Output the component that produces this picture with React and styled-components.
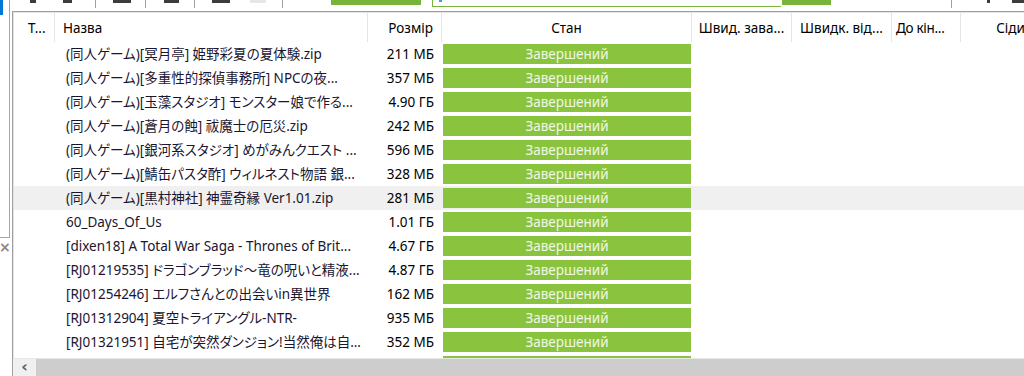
import styled, { createGlobalStyle } from "styled-components";

const GlobalStyle = createGlobalStyle`
  html, body {
    margin: 0;
    padding: 0;
    background: #ffffff;
  }
  body {
    font-family: "Noto Sans", "Noto Sans CJK JP", sans-serif;
    font-size: 13.5px;
    font-feature-settings: "palt";
    color: #000;
  }
`;

const columns = [
  { key: "type", title: "T...", width: 41, align: "left", padL: 14, padR: 8 },
  { key: "name", title: "Назва", width: 313, align: "left", padL: 8, padR: 8 },
  { key: "size", title: "Розмір", width: 74, align: "right", padL: 8, padR: 8 },
  { key: "state", title: "Стан", width: 250, align: "center", padL: 8, padR: 8 },
  { key: "dl", title: "Швид. зава...", width: 100, align: "center", padL: 3, padR: 3 },
  { key: "up", title: "Швидк. від...", width: 100, align: "center", padL: 3, padR: 3 },
  { key: "eta", title: "До кін...", width: 69, align: "left", padL: 4, padR: 0, tight: true },
  { key: "seeds", title: "Сіди", width: 100, align: "center", padL: 8, padR: 8 },
];

const torrents = [
  ["(同人ゲーム)[冥月亭] 姫野彩夏の夏体験.zip", "211 МБ"],
  ["(同人ゲーム)[多重性的探偵事務所] NPCの夜...", "357 МБ"],
  ["(同人ゲーム)[玉藻スタジオ] モンスター娘で作る...", "4.90 ГБ"],
  ["(同人ゲーム)[蒼月の蝕] 祓魔士の厄災.zip", "242 МБ"],
  ["(同人ゲーム)[銀河系スタジオ] めがみんクエスト ...", "596 МБ"],
  ["(同人ゲーム)[鯖缶パスタ酢] ウィルネスト物語 銀...", "328 МБ"],
  ["(同人ゲーム)[黒村神社] 神霊奇縁 Ver1.01.zip", "281 МБ"],
  ["60_Days_Of_Us", "1.01 ГБ"],
  ["[dixen18] A Total War Saga - Thrones of Brit...", "4.67 ГБ"],
  ["[RJ01219535] ドラゴンブラッド～竜の呪いと精液...", "4.87 ГБ"],
  ["[RJ01254246] エルフさんとの出会いin異世界", "162 МБ"],
  ["[RJ01312904] 夏空トライアングル-NTR-", "935 МБ"],
  ["[RJ01321951] 自宅が突然ダンジョン!当然俺は自...", "352 МБ"],
  ["[RJ01334417] 異世界転生したらサキュバスの...", "1.12 ГБ"],
];

function App() {
  return (
    <>
      <GlobalStyle />
      <Window>
        <Toolbar>
          <ToolIcon $w={6} $ml={30} />
          <ToolIcon $w={9} $ml={27} />
          <ToolSep $ml={23} />
          <ToolIcon $w={18} $ml={17} />
          <ToolSep $ml={14} />
          <ToolIcon $w={15} $ml={18} />
          <ToolSep $ml={15} />
          <ToolIcon $w={18} $ml={17} />
          <ToolIcon $w={16} $ml={20} $light />
          <ToolSep $ml={16} />
          <GreenBlock $w={90} $ml={48} />
          <SearchBox>
            <SearchDot />
          </SearchBox>
          <GreenBlock $w={49} $ml={1} />
          <ToolSep $ml={120} />
          <ToolIcon $w={3} $ml={35} />
          <ToolIcon $w={14} $ml={22} />
        </Toolbar>
        <Main>
          <SidePane>
            <SideBox>
              <SideSelected />
            </SideBox>
            <SideClose>×</SideClose>
          </SidePane>
          <ListPanel>
            <ListArea>
              <HeaderRow>
                {columns.map((c) => (
                  <HeaderCell
                    key={c.key}
                    $w={c.width}
                    $align={c.align}
                    $padL={c.padL}
                    $padR={c.padR}
                    $tight={c.tight}
                  >
                    {c.title}
                  </HeaderCell>
                ))}
              </HeaderRow>
              {torrents.map(([name, size], i) => (
                <Row key={i} $selected={i === 6}>
                  <Cell $w={41} />
                  <NameCell $w={313}>{name}</NameCell>
                  <Cell $w={74} $align="right">
                    {size}
                  </Cell>
                  <StateCell $w={250}>
                    <Progress>Завершений</Progress>
                  </StateCell>
                </Row>
              ))}
            </ListArea>
            <HScroll>
              <ScrollArrow>‹</ScrollArrow>
              <ScrollThumb />
            </HScroll>
          </ListPanel>
        </Main>
      </Window>
    </>
  );
}

export default App;

const Window = styled.div`
  width: 1024px;
  height: 376px;
  display: flex;
  flex-direction: column;
  overflow: hidden;
  background: #ffffff;
`;

const Toolbar = styled.div`
  height: 11px;
  flex: none;
  display: flex;
  align-items: flex-start;
  overflow: hidden;
  background: #ffffff;
`;

const ToolIcon = styled.div`
  width: ${(p) => p.$w}px;
  height: 3px;
  margin-left: ${(p) => p.$ml}px;
  background: ${(p) => (p.$light ? "#e6e6e6" : "#3c3c3c")};
  flex: none;
`;

const ToolSep = styled.div`
  width: 1px;
  height: 8px;
  margin-left: ${(p) => p.$ml}px;
  background: #a0a0a0;
  flex: none;
`;

const GreenBlock = styled.div`
  width: ${(p) => p.$w}px;
  height: 5px;
  margin-left: ${(p) => p.$ml}px;
  background: #78b43c;
  flex: none;
`;

const SearchBox = styled.div`
  width: 349px;
  height: 7px;
  margin-left: 11px;
  border-left: 1px solid #78b43c;
  border-bottom: 1px solid #78b43c;
  box-sizing: border-box;
  flex: none;
  padding-left: 6px;
`;

const SearchDot = styled.div`
  width: 3px;
  height: 2px;
  background: #35a6d8;
`;

const Main = styled.div`
  flex: 1;
  display: flex;
  min-height: 0;
`;

const SidePane = styled.div`
  width: 12px;
  flex: none;
  display: flex;
  flex-direction: column;
`;

const SideBox = styled.div`
  width: 10px;
  height: 238px;
  margin-top: -11px;
  border-right: 1px solid #a6a6a6;
  border-bottom: 1px solid #a6a6a6;
  box-sizing: border-box;
  flex: none;
`;

const SideSelected = styled.div`
  width: 3px;
  height: 15px;
  background: #0078d7;
`;

const SideClose = styled.div`
  margin-top: 2px;
  margin-left: -1px;
  width: 10px;
  font-family: "DejaVu Sans", sans-serif;
  font-size: 14px;
  font-weight: bold;
  line-height: 14px;
  color: #8a8a8a;
  text-align: center;
`;

const ListPanel = styled.div`
  flex: 1;
  display: flex;
  flex-direction: column;
  border-left: 1px solid #a0a0a0;
  border-top: 1px solid #a0a0a0;
  box-shadow: inset 1px 1px 0 #e3e3e3;
  min-width: 0;
  overflow: hidden;
`;

const ListArea = styled.div`
  flex: 1;
  overflow: hidden;
  padding-left: 1px;
`;

const HeaderRow = styled.div`
  display: flex;
  height: 30px;
  white-space: nowrap;
`;

const HeaderCell = styled.div`
  width: ${(p) => p.$w}px;
  flex: none;
  box-sizing: border-box;
  height: 30px;
  padding: 3px ${(p) => p.$padR}px 0 ${(p) => p.$padL}px;
  text-align: ${(p) => p.$align};
  letter-spacing: ${(p) => (p.$tight ? "-0.3px" : "normal")};
  line-height: 27px;
  border-right: 1px solid #e5e5e5;
  overflow: hidden;
  color: #000;
`;

const Row = styled.div`
  display: flex;
  height: 24px;
  white-space: nowrap;
  background: ${(p) => (p.$selected ? "#f0f0f0" : "transparent")};
`;

const Cell = styled.div`
  width: ${(p) => p.$w}px;
  flex: none;
  box-sizing: border-box;
  padding: 0 8px;
  line-height: 24px;
  text-align: ${(p) => p.$align || "left"};
  overflow: hidden;
`;

const NameCell = styled(Cell)`
  padding-left: 11px;
  padding-right: 4px;
  color: #1b1530;
  text-overflow: ellipsis;
`;

const StateCell = styled(Cell)`
  padding: 2px 1px;
`;

const Progress = styled.div`
  height: 20px;
  background: #8ac43f;
  color: #eef7e4;
  text-align: center;
  line-height: 20px;
`;

const HScroll = styled.div`
  height: 17px;
  flex: none;
  display: flex;
  background: #cdcdcd;
  border-top: 1px solid #e6e6e6;
`;

const ScrollArrow = styled.div`
  width: 23px;
  flex: none;
  background: #f0f0f0;
  color: #606060;
  font-family: "DejaVu Sans", sans-serif;
  font-size: 16px;
  font-weight: bold;
  line-height: 16px;
  text-align: center;
`;

const ScrollThumb = styled.div`
  flex: 1;
  background: #cdcdcd;
`;
